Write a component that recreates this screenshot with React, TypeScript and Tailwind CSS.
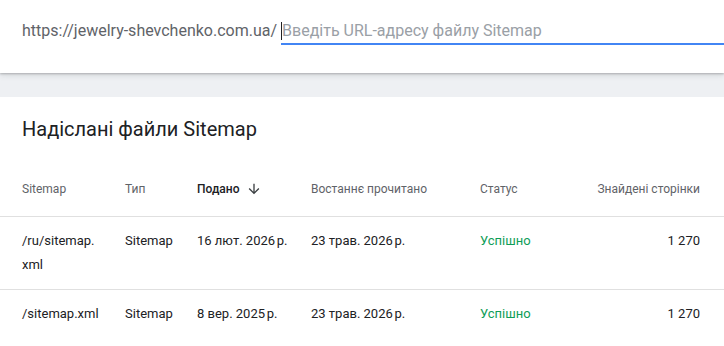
import React from "react";

const rows = [
  { path: "/ru/sitemap.xml", type: "Sitemap", sub: "16 лют. 2026\u202Fр.", read: "23 трав. 2026\u202Fр.", status: "Успішно", pages: "1 270" },
  { path: "/sitemap.xml", type: "Sitemap", sub: "8 вер. 2025\u202Fр.", read: "23 трав. 2026\u202Fр.", status: "Успішно", pages: "1 270" },
];

const cols = "grid grid-cols-[103px_72px_114px_169px_1fr_auto]";

export default function App() {
  return (
    <div className="w-[724px] h-[346px] overflow-hidden bg-[#eef0f3] flex flex-col" style={{ fontFamily: "Roboto, 'Noto Sans', sans-serif" }}>
      <div className="relative z-10 h-[73px] shrink-0 bg-white shadow-[0_1px_2px_rgba(60,64,67,0.3),0_2px_6px_rgba(60,64,67,0.15)] flex items-start pl-[22px] pt-[19px]">
        <span className="text-[16px] leading-[24px] text-[#5f6368] whitespace-nowrap">https://jewelry-shevchenko.com.ua/</span>
        <div className="ml-[4px] flex-1 h-[26px] border-b-2 border-[#4285f4] relative">
          <div className="absolute left-0 top-[3px] w-px h-[18px] bg-[#202124]" />
          <span className="pl-[1px] text-[16px] leading-[24px] text-[#9aa0a6] whitespace-nowrap">Введіть URL-адресу файлу Sitemap</span>
        </div>
      </div>
      <div className="mt-[24px] bg-white flex-1">
        <div className="pl-[22px] pt-[18px] h-[64px] text-[20px] leading-[28px] text-[#202124]">Надіслані файли Sitemap</div>
        <div className={`${cols} pl-[22px] pr-[24px] h-[56px] items-center border-b border-[#e0e0e0] text-[12px] text-[#5f6368]`}>
          <div>Sitemap</div>
          <div>Тип</div>
          <div className="flex items-center text-[#202124] font-medium">
            Подано
            <svg className="ml-[7px]" width="16" height="16" viewBox="0 0 24 24" fill="#3c4043">
              <path d="M20 12l-1.41-1.41L13 16.17V4h-2v12.17l-5.58-5.59L4 12l8 8 8-8z" />
            </svg>
          </div>
          <div>Востаннє прочитано</div>
          <div>Статус</div>
          <div className="text-right">Знайдені сторінки</div>
        </div>
        {rows.map((r, i) => (
          <div key={i} className={`${cols} pl-[22px] pr-[24px] py-[12px] text-[13px] leading-[24px] text-[#202124] ${i === 0 ? "border-b border-[#e0e0e0]" : ""}`}>
            <div className="pr-[25px] break-words min-w-0">{r.path}</div>
            <div>{r.type}</div>
            <div>{r.sub}</div>
            <div>{r.read}</div>
            <div className="text-[#0f9d58]">{r.status}</div>
            <div className="text-right">{r.pages}</div>
          </div>
        ))}
      </div>
    </div>
  );
}
